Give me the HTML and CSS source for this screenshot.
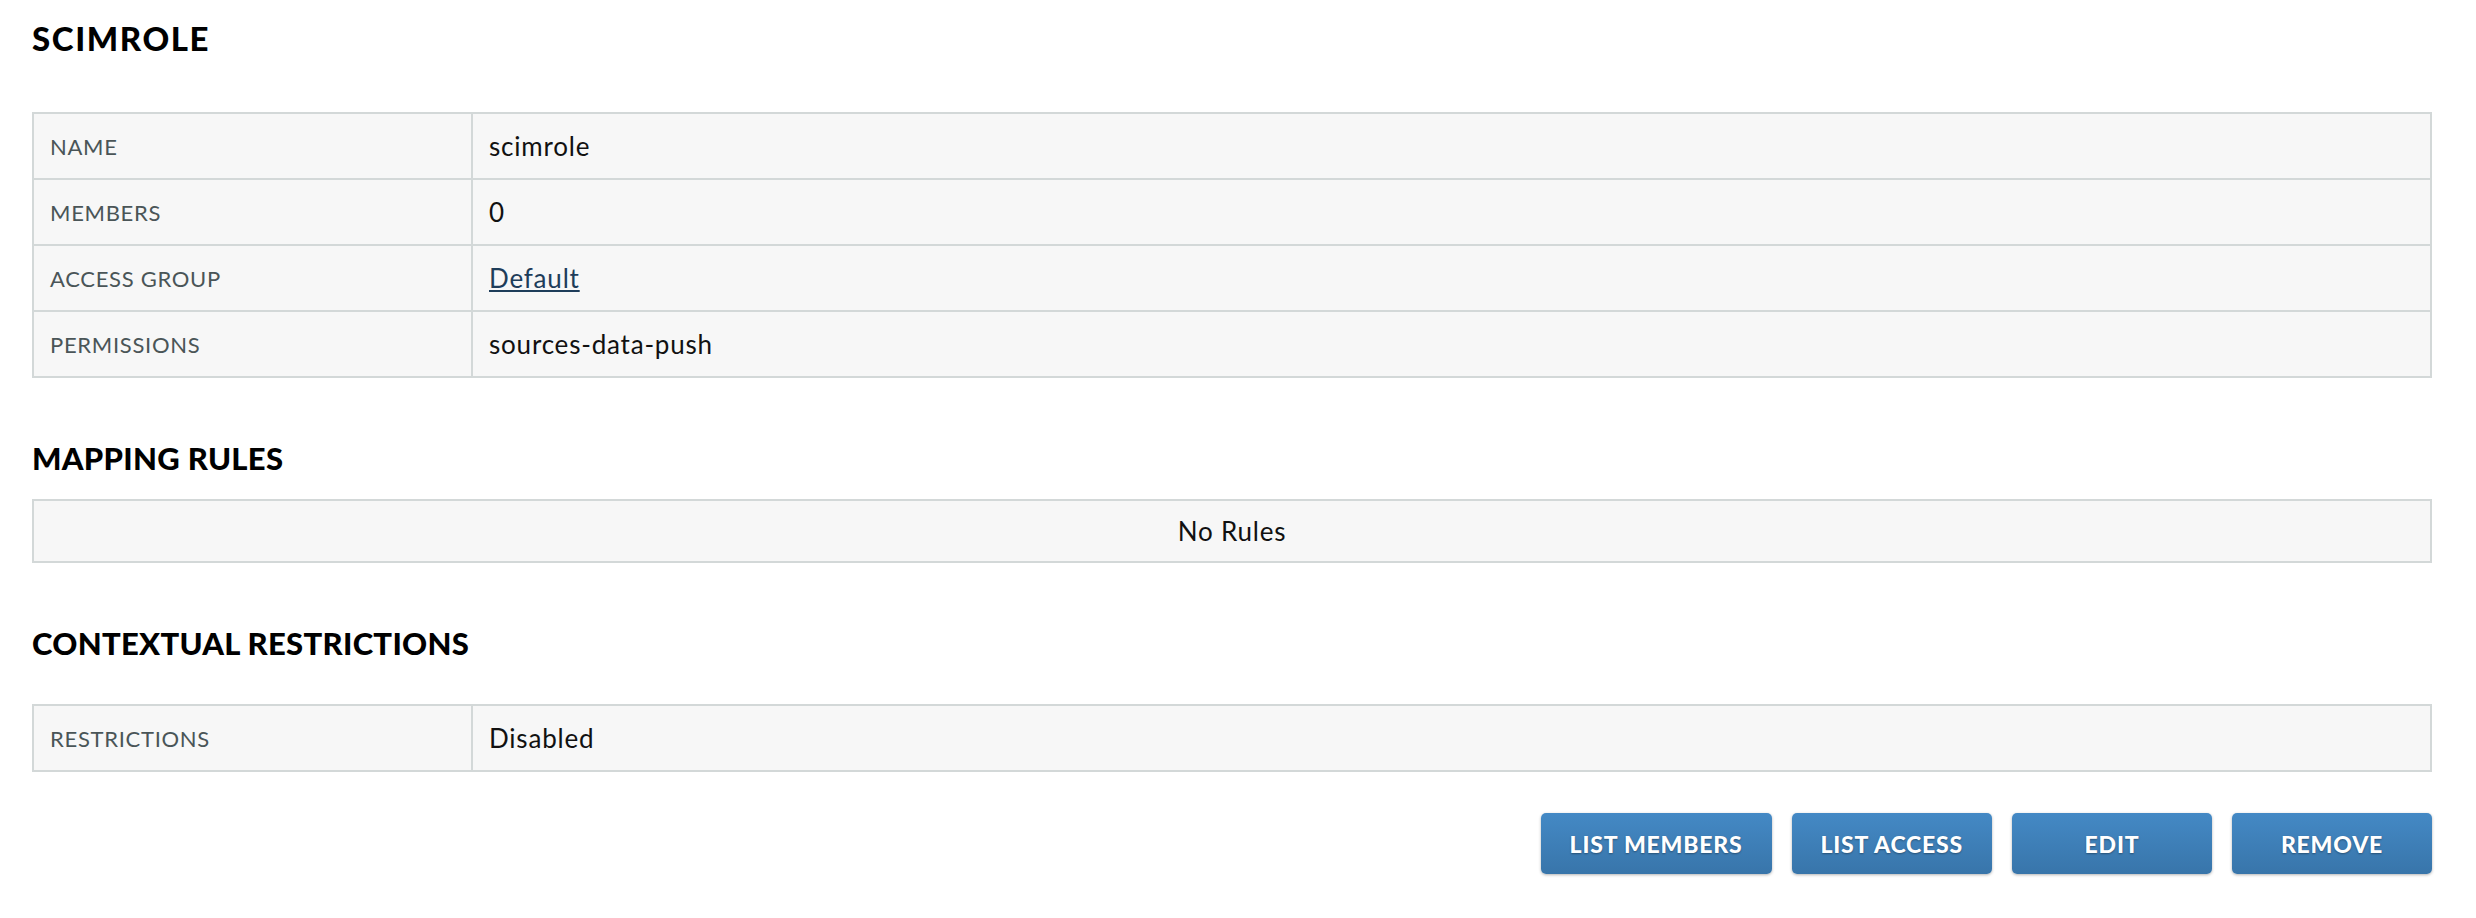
FILE: index.html
```html
<html>
<head>
    <meta http-equiv="Content-Type" content="text/html; charset=UTF-8" />
    <title>scimrole</title>
    <link rel="stylesheet" href="styles.css">
</head>
<body>

<div class="page">

    <h1 class="title">SCIMROLE</h1>

    <table class="info first">
        <tr><td class="lbl">NAME</td><td>scimrole</td></tr>
        <tr><td class="lbl">MEMBERS</td><td>0</td></tr>
        <tr><td class="lbl">ACCESS GROUP</td><td><a href="#">Default</a></td></tr>
        <tr><td class="lbl">PERMISSIONS</td><td>sources-data-push</td></tr>
    </table>

    <h2 class="section">MAPPING RULES</h2>

    <table class="info rules">
        <tr><td class="empty">No Rules</td></tr>
    </table>

    <h2 class="section ctx">CONTEXTUAL RESTRICTIONS</h2>

    <table class="info">
        <tr><td class="lbl">RESTRICTIONS</td><td>Disabled</td></tr>
    </table>

    <div class="actions">
        <a class="btn" href="#">LIST MEMBERS</a>
        <a class="btn" href="#">LIST ACCESS</a>
        <a class="btn" href="#">EDIT</a>
        <a class="btn" href="#">REMOVE</a>
    </div>

</div>

</body>
</html>
```

FILE: styles.css
```css
body {
    margin: 0;
    font-family: Lato, "Open Sans", Arial, sans-serif;
    color: #111;
    background: #fff;
}

.page {
    padding: 20px 44px 0 32px;
}

/* headings */
.title, .section {
    margin: 0;
    font-size: 31px;
    line-height: 36px;
    font-weight: 900;
    letter-spacing: 0.3px;
    color: #000;
}
.title {
    font-size: 33px;
    letter-spacing: 1.6px;
    margin-bottom: 56px;
}
.section {
    margin-top: 62px;
    margin-bottom: 23px;
}
.section.ctx {
    margin-bottom: 43px;
}

/* key / value tables */
table.info {
    width: 100%;
    border-collapse: collapse;
    background: #f7f7f7;
    border: 2px solid #d3d8d8;
}
table.info td {
    border: 2px solid #d3d8d8;
    height: 66px;
    padding: 0 16px;
    font-size: 26px;
    letter-spacing: 0.8px;
    color: #111;
    vertical-align: middle;
}
table.info td.lbl {
    width: 405px;
    font-size: 22px;
    letter-spacing: 0.7px;
    color: #4a5557;
}
table.info td.empty {
    height: 62px;
    text-align: center;
}
table.info a {
    color: #1e3d5a;
    text-decoration: underline;
}

/* buttons */
.actions {
    display: flex;
    justify-content: flex-end;
    gap: 20px;
    margin-top: 41px;
}
.btn {
    display: inline-flex;
    align-items: center;
    justify-content: center;
    box-sizing: border-box;
    height: 61px;
    min-width: 200px;
    padding: 0 29px;
    border-radius: 5px;
    background: linear-gradient(#4489c5, #3875aa);
    box-shadow: 0 1px 3px rgba(0, 0, 0, 0.3);
    color: #fff;
    font-size: 23px;
    font-weight: 900;
    letter-spacing: 0.8px;
    text-decoration: none;
    text-shadow: 0 1px 2px rgba(0, 0, 0, 0.35);
}
```
